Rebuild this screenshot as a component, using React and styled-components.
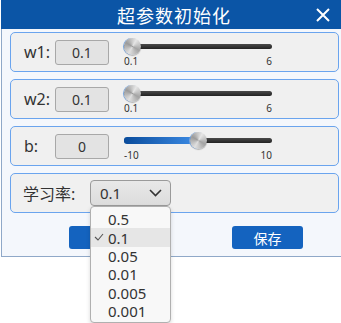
import React from 'react';
import styled, { createGlobalStyle } from 'styled-components';

const Global = createGlobalStyle`
    html, body {
        margin: 0;
        padding: 0;
        background: #ffffff;
    }
    body {
        font-family: "Noto Sans", "Noto Sans CJK SC", sans-serif;
    }
`

const Page = styled.div`
    width: 341px;
    height: 323px;
    overflow: hidden;
    background: #ffffff;
`

const Window = styled.div`
    width: 346px;
    margin-left: 1px;
    background: #f4f7fc;
    border: 1px solid #8fa8c8;
    border-top: none;
    box-sizing: border-box;
`

const TitleBar = styled.div`
    position: relative;
    height: 29px;
    margin-left: -1px;
    margin-right: -1px;
    background: #0b55a6;
    color: #ffffff;
    display: flex;
    align-items: center;
    justify-content: center;
    font-family: "Noto Sans CJK SC", sans-serif;
    font-size: 18px;
    letter-spacing: 1px;
    .close {
        position: absolute;
        right: 17px;
        top: 8px;
        width: 14px;
        height: 14px;
    }
`

const Body = styled.div`
    padding: 3px 7px 7px 8px;
    display: flex;
    flex-direction: column;
    gap: 7px;
`

const Panel = styled.div`
    position: relative;
    height: 40px;
    box-sizing: border-box;
    border: 1px solid #6aa4ee;
    border-radius: 5px;
    background: #f0f0f0;
    display: flex;
    align-items: center;
    padding-left: ${p => p.$pad || 13}px;
`

const Label = styled.div`
    width: ${p => p.$w || 31}px;
    font-size: 16px;
    color: #333333;
    font-family: "Noto Sans", "Noto Sans CJK SC", sans-serif;
`

const ValueBox = styled.div`
    width: 54px;
    height: 25px;
    box-sizing: border-box;
    border: 1px solid #a8a8a8;
    border-radius: 3px;
    background: #e3e3e3;
    display: flex;
    align-items: center;
    justify-content: center;
    font-size: 14px;
    color: #333333;
`

const SliderWrap = styled.div`
    position: relative;
    width: 148px;
    height: 32px;
    margin-left: 15px;
    margin-top: 2px;
`

const Track = styled.div`
    position: absolute;
    left: 0;
    right: 0;
    top: 7px;
    height: 5px;
    border-radius: 3px;
    background: linear-gradient(#4a4a4a, #222222);
`

const Fill = styled.div`
    position: absolute;
    left: 0;
    top: 6px;
    height: 7px;
    border-radius: 3px;
    background: linear-gradient(90deg, #0a4c9c, #3d8ce6);
`

const Thumb = styled.div`
    position: absolute;
    top: 1px;
    width: 17px;
    height: 17px;
    margin-left: -8px;
    border-radius: 50%;
    box-sizing: border-box;
    background: conic-gradient(from 30deg, #e6e6e6, #a3a3a3, #e0e0e0, #9a9a9a, #e6e6e6);
    box-shadow: -1px 0 0 #7aa6dc, 0 1px 1px rgba(0,0,0,0.25);
`

const Ticks = styled.div`
    position: absolute;
    left: 0;
    right: 0;
    top: 17px;
    display: flex;
    justify-content: space-between;
    font-size: 10px;
    color: #333333;
`

const SelectBox = styled.div`
    position: relative;
    width: 81px;
    height: 26px;
    box-sizing: border-box;
    border: 1px solid #9a9a9a;
    border-radius: 4px;
    background: linear-gradient(#e8e8e8, #dcdcdc);
    display: flex;
    align-items: center;
    justify-content: space-between;
    padding: 0 8px 0 9px;
    font-size: 15px;
    color: #333333;
`

const Popup = styled.div`
    position: absolute;
    left: -1px;
    top: 25px;
    width: 81px;
    box-sizing: border-box;
    border: 1px solid #b0b0b0;
    border-radius: 4px;
    background: #f8f8f8;
    box-shadow: 0 2px 4px rgba(0,0,0,0.15);
    padding: 3px 0 2px;
    z-index: 10;
`

const Option = styled.div`
    position: relative;
    height: 18.4px;
    display: flex;
    align-items: center;
    padding-left: 17px;
    font-size: 15px;
    color: #333333;
    background: ${p => p.$active ? '#e6e6e6' : 'transparent'};
    svg {
        position: absolute;
        left: 3px;
        top: 5px;
    }
`

const ButtonRow = styled.div`
    display: flex;
    gap: 92px;
    padding-left: 59px;
    margin-top: 6px;
`

const Button = styled.div`
    width: 71px;
    height: 23px;
    border-radius: 3px;
    background: #1463bf;
    color: #ffffff;
    font-family: "Noto Sans CJK SC", sans-serif;
    font-size: 14px;
    display: flex;
    align-items: center;
    justify-content: center;
`

const SliderRow = ({ label, value, min, max, pct, fill }) => (
    <Panel>
        <Label>{label}</Label>
        <ValueBox>{value}</ValueBox>
        <SliderWrap>
            <Track />
            {fill && <Fill style={{ width: `calc(8px + ${pct} * (100% - 16px))` }} />}
            <Thumb style={{ left: `calc(8px + ${pct} * (100% - 16px))` }} />
            <Ticks><span>{min}</span><span>{max}</span></Ticks>
        </SliderWrap>
    </Panel>
)

const rates = ['0.5', '0.1', '0.05', '0.01', '0.005', '0.001'];

const App = () => {
    return (
        <Page>
            <Global />
            <Window>
                <TitleBar>
                    超参数初始化
                    <svg className="close" viewBox="0 0 14 14">
                        <path d="M1 1 L13 13 M13 1 L1 13" stroke="#ffffff" strokeWidth="2" />
                    </svg>
                </TitleBar>
                <Body>
                    <SliderRow label="w1:" value="0.1" min="0.1" max="6" pct={0} />
                    <SliderRow label="w2:" value="0.1" min="0.1" max="6" pct={0} />
                    <SliderRow label="b:" value="0" min="-10" max="10" pct={0.5} fill />
                    <Panel $pad={12}>
                        <Label $w={67}>学习率:</Label>
                        <SelectBox>
                            <span>0.1</span>
                            <svg width="13" height="8" viewBox="0 0 13 8">
                                <path d="M1 1 L6.5 6.5 L12 1" fill="none" stroke="#333" strokeWidth="1.6" />
                            </svg>
                            <Popup>
                                {rates.map(r => (
                                    <Option key={r} $active={r === '0.1'}>
                                        {r === '0.1' && (
                                            <svg width="10" height="8" viewBox="0 0 10 8">
                                                <path d="M1 4 L4 7 L9 1" fill="none" stroke="#555" strokeWidth="1.1" />
                                            </svg>
                                        )}
                                        {r}
                                    </Option>
                                ))}
                            </Popup>
                        </SelectBox>
                    </Panel>
                    <ButtonRow>
                        <Button>取消</Button>
                        <Button>保存</Button>
                    </ButtonRow>
                </Body>
            </Window>
        </Page>
    )
}

export default App
